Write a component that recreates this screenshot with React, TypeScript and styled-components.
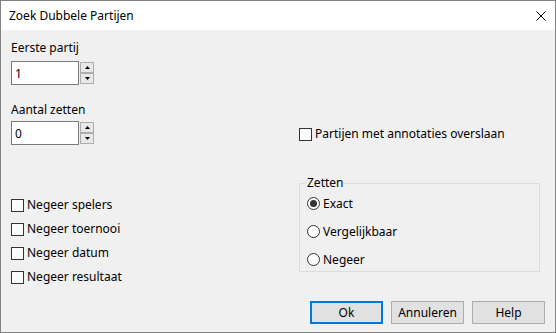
import React, { useState } from 'react';
import styled, { createGlobalStyle } from 'styled-components';

const GlobalStyle = createGlobalStyle`
	html, body {
		margin: 0;
		padding: 0;
		background: #ffffff;
	}
	body {
		font-family: 'Noto Sans', 'Liberation Sans', sans-serif;
		font-size: 12px;
		color: #000000;
	}
`;

const Window = styled.div`
	box-sizing: border-box;
	width: 556px;
	height: 333px;
	border: 1px solid #838383;
	display: flex;
	flex-direction: column;
	background: #f0f0f0;
`;

const TitleBar = styled.div`
	height: 29px;
	background: #ffffff;
	display: flex;
	align-items: center;
	justify-content: space-between;
	padding: 0 8px 0 8px;
`;

const Title = styled.div`
	font-size: 12px;
	line-height: 16px;
`;

const CloseButton = styled.button`
	border: none;
	background: transparent;
	padding: 0;
	width: 12px;
	height: 12px;
	display: flex;
	align-items: center;
	justify-content: center;
`;

const Body = styled.div`
	flex: 1;
	display: grid;
	grid-template-columns: 288px 1fr;
	grid-template-rows: 1fr auto;
	padding: 10px 10px 8px 10px;
`;

const LeftColumn = styled.div`
	display: flex;
	flex-direction: column;
`;

const RightColumn = styled.div`
	display: flex;
	flex-direction: column;
	padding-top: 86px;
`;

const FieldLabel = styled.label<{ $top: number; $gap: number }>`
	display: block;
	line-height: 16px;
	margin-top: ${({ $top }) => $top}px;
	margin-bottom: ${({ $gap }) => $gap}px;
`;

const SpinRow = styled.div`
	display: flex;
	align-items: center;
	gap: 1px;
`;

const NumberInput = styled.input`
	box-sizing: border-box;
	width: 68px;
	height: 24px;
	border: 1px solid #7a7a7a;
	background: #ffffff;
	font: inherit;
	padding: 0 3px;
	outline: none;
`;

const SpinButtons = styled.div`
	display: flex;
	flex-direction: column;
`;

const SpinButton = styled.button`
	box-sizing: border-box;
	width: 14px;
	height: 11px;
	padding: 0;
	border: 1px solid #adadad;
	background: #e8e8e8;
	display: flex;
	align-items: center;
	justify-content: center;
`;

const CheckList = styled.div`
	display: flex;
	flex-direction: column;
	gap: 8px;
	margin-top: 52px;
`;

const CheckRow = styled.label`
	display: flex;
	align-items: center;
	gap: 3px;
	height: 16px;
	line-height: 16px;
`;

const Box = styled.span`
	box-sizing: border-box;
	width: 13px;
	height: 13px;
	border: 1px solid #333333;
	background: #ffffff;
	flex-shrink: 0;
`;

const GroupBox = styled.fieldset`
	box-sizing: border-box;
	width: 241px;
	height: 96px;
	margin: 34px 0 0 0;
	padding: 5px 7px 0 7px;
	border: 1px solid #dcdcdc;
	display: flex;
	flex-direction: column;
	gap: 12px;
`;

const Legend = styled.legend`
	padding: 0 1px;
	margin-left: -1px;
	line-height: 14px;
`;

const RadioRow = styled.label`
	display: flex;
	align-items: center;
	gap: 3px;
	height: 16px;
`;

const RadioCircle = styled.span<{ $checked?: boolean }>`
	box-sizing: border-box;
	width: 13px;
	height: 13px;
	border-radius: 50%;
	border: 1px solid #333333;
	background: #ffffff;
	flex-shrink: 0;
	display: flex;
	align-items: center;
	justify-content: center;
	&::after {
		content: '';
		display: ${({ $checked }) => ($checked ? 'block' : 'none')};
		width: 7px;
		height: 7px;
		border-radius: 50%;
		background: #333333;
	}
`;

const Footer = styled.div`
	grid-column: 1 / 3;
	display: flex;
	justify-content: flex-end;
	gap: 8px;
`;

const DialogButton = styled.button<{ $default?: boolean }>`
	box-sizing: border-box;
	width: 73px;
	height: 23px;
	font: inherit;
	color: #000000;
	background: #e1e1e1;
	border: ${({ $default }) => ($default ? '2px solid #0078d7' : '1px solid #adadad')};
	padding: 0;
`;

const ArrowUp = () => (
	<svg width="5" height="3" viewBox="0 0 5 3">
		<path d="M2.5 0 L5 3 L0 3 Z" fill="#000" />
	</svg>
);

const ArrowDown = () => (
	<svg width="5" height="3" viewBox="0 0 5 3">
		<path d="M0 0 L5 0 L2.5 3 Z" fill="#000" />
	</svg>
);

const Spinner = ({ value }: { value: number }) => {
	const [ n, setN ] = useState(value);
	return (
		<SpinRow>
			<NumberInput value={n} onChange={(e) => setN(Number(e.target.value) || 0)} />
			<SpinButtons>
				<SpinButton onClick={() => setN(n + 1)}>
					<ArrowUp />
				</SpinButton>
				<SpinButton onClick={() => setN(Math.max(0, n - 1))}>
					<ArrowDown />
				</SpinButton>
			</SpinButtons>
		</SpinRow>
	);
};

const ignoreOptions = [ 'Negeer spelers', 'Negeer toernooi', 'Negeer datum', 'Negeer resultaat' ];
const moveOptions = [ 'Exact', 'Vergelijkbaar', 'Negeer' ];

export default function App() {
	const [ mode, setMode ] = useState('Exact');
	return (
		<>
			<GlobalStyle />
			<Window>
				<TitleBar>
					<Title>Zoek Dubbele Partijen</Title>
					<CloseButton aria-label="Sluiten">
						<svg width="10" height="10" viewBox="0 0 10 10">
							<path d="M0.5 0.5 L9.5 9.5 M9.5 0.5 L0.5 9.5" stroke="#000" strokeWidth="1" />
						</svg>
					</CloseButton>
				</TitleBar>
				<Body>
					<LeftColumn>
						<FieldLabel $top={0} $gap={5}>Eerste partij</FieldLabel>
						<Spinner value={1} />
						<FieldLabel $top={17} $gap={3}>Aantal zetten</FieldLabel>
						<Spinner value={0} />
						<CheckList>
							{ignoreOptions.map((o) => (
								<CheckRow key={o}>
									<Box />
									{o}
								</CheckRow>
							))}
						</CheckList>
					</LeftColumn>
					<RightColumn>
						<CheckRow>
							<Box />
							Partijen met annotaties overslaan
						</CheckRow>
						<GroupBox>
							<Legend>Zetten</Legend>
							{moveOptions.map((o) => (
								<RadioRow key={o} onClick={() => setMode(o)}>
									<RadioCircle $checked={mode === o} />
									{o}
								</RadioRow>
							))}
						</GroupBox>
					</RightColumn>
					<Footer>
						<DialogButton $default>Ok</DialogButton>
						<DialogButton>Annuleren</DialogButton>
						<DialogButton>Help</DialogButton>
					</Footer>
				</Body>
			</Window>
		</>
	);
}
